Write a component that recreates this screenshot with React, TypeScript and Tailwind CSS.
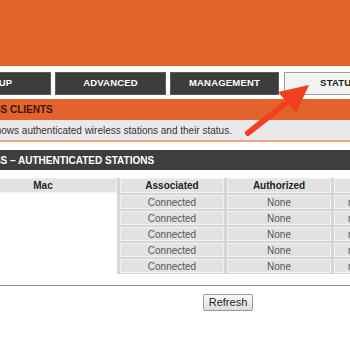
const rows = [1, 2, 3, 4, 5]

function Tab({ label, active, w, ml }: { label: string; active?: boolean; w: string; ml: string }) {
  return (
    <div
      className={`${w} ${ml} shrink-0 h-[23px] flex items-center justify-center text-[9.5px] font-bold tracking-[0.2px] ${
        active ? 'bg-[#f3f3f3] border border-[#9c9c9c] text-[#1a1a1a]' : 'bg-[#3c3c3c] border border-[#5c5c5c] text-white'
      }`}
    >
      {label}
    </div>
  )
}

export default function App() {
  return (
    <div className="relative w-[350px] h-[364px] overflow-hidden bg-white font-['Liberation_Sans',Arial,sans-serif]">
      <div className="ml-[-64px] w-[640px]">
        <div className="h-[66px] bg-[#e4622b]" />

        <div className="mt-[6px] flex pl-[5px]">
          <Tab label="SETUP" w="w-[110px]" ml="ml-0" />
          <Tab label="ADVANCED" w="w-[111px]" ml="ml-[4px]" />
          <Tab label="MANAGEMENT" w="w-[109px]" ml="ml-[4px]" />
          <Tab label="STATUS" active w="w-[110px]" ml="ml-[5px]" />
        </div>

        <div className="mt-[4px] h-[21px] bg-[#e4622b] pl-[19px] flex items-end pb-[3px] text-[10px] font-bold text-[#3b1608]">
          WIRELESS CLIENTS
        </div>
        <div className="h-[22px] bg-[#eaeaea] border-b-2 border-[#eea581] pl-[8px] pt-[3px] text-[10px] text-[#333]">
          This page shows authenticated wireless stations and their status.
        </div>

        <div className="mt-[8px] h-[20px] bg-[#3e3e3e] pl-[19px] flex items-center text-[10px] font-bold text-white">
          WIRELESS – AUTHENTICATED STATIONS
        </div>

        <div className="mt-[8px] pl-[33px] flex">
          <div className="w-[148px] shrink-0 flex flex-col">
            <div className="h-[15px] bg-[#e2e2e2] border border-[#f2f2f2] flex items-center justify-center text-[10px] font-bold text-[#222]">
              Mac
            </div>
          </div>
          <div className="shrink-0 bg-[#d6d6d6] pl-[3px] pb-[1px]">
            <div className="grid grid-cols-[104px_104px_104px_104px] gap-x-[3px] gap-y-[2px]">
              {['Associated', 'Authorized'].map(h => (
                <div
                  key={h}
                  className="h-[15px] bg-[#e2e2e2] border border-[#f2f2f2] flex items-center justify-center text-[10px] font-bold text-[#222]"
                >
                  {h}
                </div>
              ))}
              <div className="h-[15px] bg-[#e2e2e2] border border-[#f2f2f2] flex items-center justify-center text-[10px] font-bold text-[#222]">
                SSID
              </div>
              <div className="h-[15px] bg-[#e2e2e2] border border-[#f2f2f2]" />
              {rows.map(r => (
                <div key={r} className="contents">
                  <div className="h-[14px] bg-[#e2e2e2] border border-[#f2f2f2] flex items-center justify-center text-[10px] text-[#555]">
                    Connected
                  </div>
                  <div className="h-[14px] bg-[#e2e2e2] border border-[#f2f2f2] flex items-center justify-center text-[10px] text-[#555]">
                    None
                  </div>
                  <div className="h-[14px] bg-[#e2e2e2] border border-[#f2f2f2] flex items-center pl-[13px] text-[10px] text-[#555]">
                    rt2860_wlan
                  </div>
                  <div className="h-[14px] bg-[#e2e2e2] border border-[#f2f2f2]" />
                </div>
              ))}
            </div>
          </div>
        </div>

        <div className="mt-[11px] h-px bg-[#8c8c8c]" />

        <div className="mt-[8px] pl-[267px] flex">
          <button className="w-[50px] h-[17px] border border-[#9a9a9a] rounded-[2px] bg-gradient-to-b from-[#fbfbfb] to-[#dcdcdc] text-[11px] text-[#222] leading-none">
            Refresh
          </button>
        </div>
      </div>

      <svg className="absolute inset-0 pointer-events-none" width="350" height="364" viewBox="0 0 350 364">
        <line x1="248" y1="133" x2="290" y2="100" stroke="#f0401f" strokeWidth="6" strokeLinecap="round" />
        <polygon points="309,85 278,92 296,113" fill="#f0401f" />
      </svg>
    </div>
  )
}
